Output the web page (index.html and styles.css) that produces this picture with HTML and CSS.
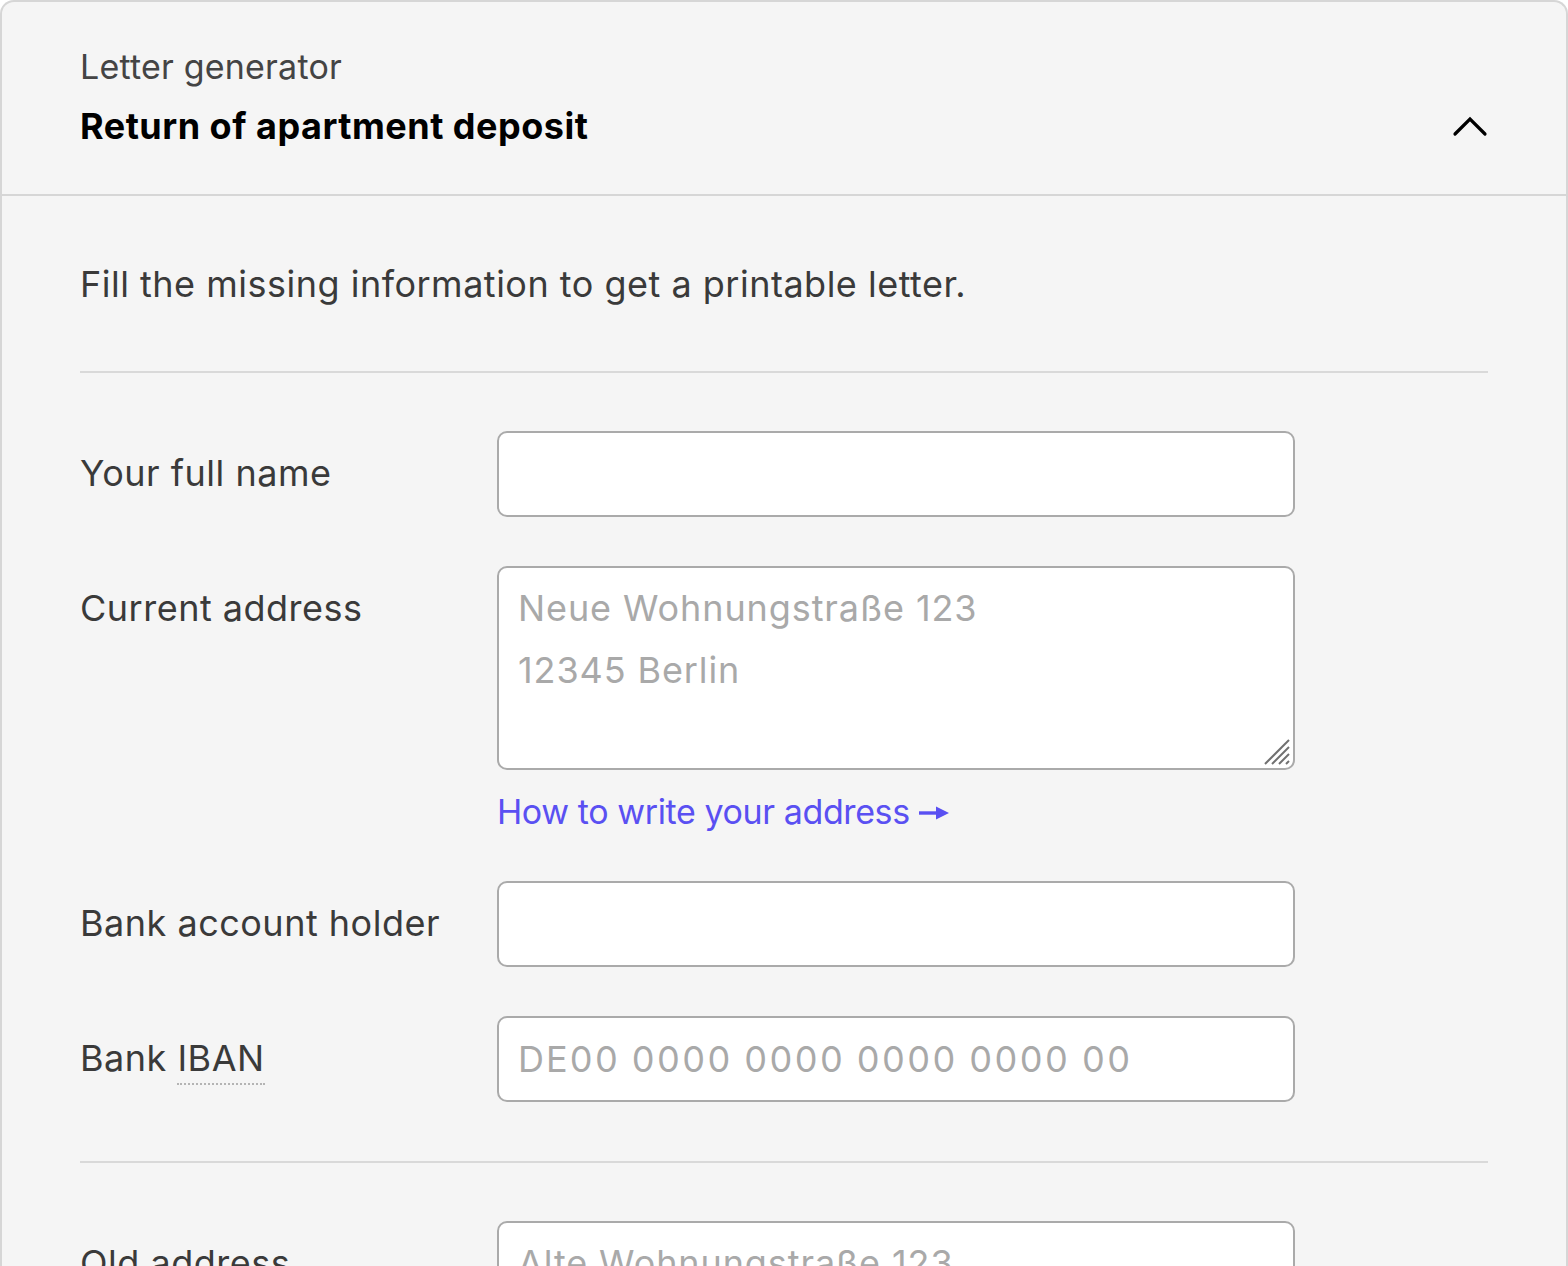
FILE: index.html
```html
<!DOCTYPE html>
<html lang="en">
<head>
<meta charset="utf-8">
<title>Letter generator</title>
<link rel="stylesheet" href="styles.css">
</head>
<body>
<section class="card">
  <header class="card-header">
    <div class="titles">
      <div class="eyebrow">Letter generator</div>
      <h1 class="title">Return of apartment deposit</h1>
    </div>
    <button class="toggle" aria-label="Collapse">
      <svg width="36" height="22" viewBox="0 0 36 22"><path d="M3 19 L18 4 L33 19" fill="none" stroke="#000" stroke-width="3.2" stroke-linecap="round" stroke-linejoin="miter"/></svg>
    </button>
  </header>
  <div class="card-body">
    <p class="intro">Fill the missing information to get a printable letter.</p>
    <hr class="divider">
    <div class="fields">
      <label class="label" for="name">Your full name</label>
      <div class="control"><input class="input" id="name" type="text"></div>

      <label class="label" for="addr">Current address</label>
      <div class="control">
        <div class="ta-wrap">
          <textarea class="input textarea" id="addr" placeholder="Neue Wohnungstraße 123&#10;12345 Berlin"></textarea>
          <svg class="grip" width="28" height="28" viewBox="0 0 28 28"><g stroke="#707070" stroke-width="2"><path d="M2 26 L26 2"/><path d="M9 26 L26 9"/><path d="M16 26 L26 16"/><path d="M23 26 L26 23"/></g></svg>
        </div>
        <a class="help-link" href="#">How to write your address <svg class="arrow" width="32" height="16" viewBox="0 0 32 16"><path d="M1 8 H20" stroke="#5a50f2" stroke-width="3.4"/><path d="M18 1.5 L31 8 L18 14.5 Z" fill="#5a50f2"/></svg></a>
      </div>

      <label class="label" for="holder">Bank account holder</label>
      <div class="control"><input class="input" id="holder" type="text"></div>

      <label class="label" for="iban">Bank <abbr class="abbr" title="International Bank Account Number">IBAN</abbr></label>
      <div class="control"><input class="input iban" id="iban" type="text" placeholder="DE00 0000 0000 0000 0000 00"></div>
    </div>
    <hr class="divider">
    <div class="fields">
      <label class="label" for="old">Old address</label>
      <div class="control">
        <div class="ta-wrap">
          <textarea class="input textarea" id="old" placeholder="Alte Wohnungstraße 123&#10;12345 Berlin"></textarea>
          <svg class="grip" width="28" height="28" viewBox="0 0 28 28"><g stroke="#707070" stroke-width="2"><path d="M2 26 L26 2"/><path d="M9 26 L26 9"/><path d="M16 26 L26 16"/><path d="M23 26 L26 23"/></g></svg>
        </div>
      </div>
    </div>
  </div>
</section>
</body>
</html>
```

FILE: styles.css
```css
* { box-sizing: border-box; }
html, body { margin: 0; padding: 0; background: #ffffff; }
body {
  font-family: Inter, Roboto, "Noto Sans", sans-serif;
  color: #3a3a3a;
}
.card {
  background: #f5f5f5;
  border: 2px solid #d6d6d6;
  border-bottom: none;
  border-radius: 14px 14px 0 0;
  min-height: 1400px;
}
.card-header {
  display: flex;
  justify-content: space-between;
  align-items: center;
  padding: 42px 78px 40px 78px;
  border-bottom: 2px solid #d6d6d6;
}
.eyebrow {
  font-size: 34px;
  line-height: 46px;
  color: #444;
  letter-spacing: 0.2px;
}
.title {
  margin: 8px 0 0 0;
  font-size: 36px;
  line-height: 56px;
  font-weight: 700;
  color: #000;
  letter-spacing: 0.5px;
}
.toggle {
  border: none;
  background: none;
  padding: 0;
  margin-top: 54px;
  width: 36px;
  height: 22px;
  display: flex;
}
.card-body {
  padding: 60px 78px 0 78px;
}
.intro {
  margin: 0;
  font-size: 36px;
  line-height: 56px;
  color: #3a3a3a;
  letter-spacing: 0.5px;
}
.divider {
  border: none;
  border-top: 2px solid #d9d9d9;
  margin: 59px 0 58px 0;
}
.fields {
  display: grid;
  grid-template-columns: 417px 798px;
  row-gap: 49px;
}
.label {
  font-size: 36px;
  line-height: 62px;
  padding-top: 11px;
  color: #3a3a3a;
  letter-spacing: 0.5px;
}
.abbr {
  text-decoration: none;
  border-bottom: 2px dotted #b4b4b4;
  padding-bottom: 3px;
}
.control {
  display: flex;
  flex-direction: column;
  align-items: flex-start;
}
.ta-wrap {
  position: relative;
  width: 798px;
}
.input {
  display: block;
  width: 798px;
  height: 86px;
  border: 2px solid #aaaaaa;
  border-radius: 10px;
  background: #ffffff;
  padding: 0 19px;
  font-family: Inter, Roboto, "Noto Sans", sans-serif;
  font-size: 36px;
  color: #333;
  letter-spacing: 0.9px;
  outline: none;
}
.input::placeholder { color: #a9a9a9; }
.iban {
  font-variant-numeric: tabular-nums;
  letter-spacing: 1.9px;
}
.textarea {
  height: 204px;
  padding: 9px 19px;
  line-height: 62px;
  resize: none;
}
.grip {
  position: absolute;
  right: 4px;
  bottom: 4px;
}
.help-link {
  display: flex;
  align-items: center;
  gap: 8px;
  margin-top: 22px;
  font-size: 34px;
  line-height: 40px;
  color: #5a50f2;
  text-decoration: none;
  letter-spacing: -0.4px;
}
.arrow { margin-top: 2px; }
```
